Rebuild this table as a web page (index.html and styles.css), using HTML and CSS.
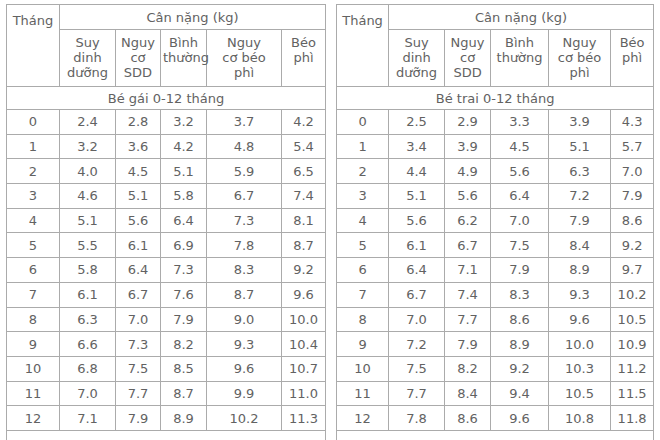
FILE: index.html
```html
<!DOCTYPE html>
<html lang="vi">
<head>
<meta charset="utf-8">
<title>Cân nặng bé 0-12 tháng</title>
<link rel="stylesheet" href="styles.css">
</head>
<body>
<div class="page">
  <table class="chart chart-girl">
    <colgroup>
      <col class="c-month"><col class="c-1"><col class="c-2"><col class="c-3"><col class="c-4"><col class="c-5">
    </colgroup>
    <thead>
      <tr class="h1">
        <th rowspan="2" class="month-head">Tháng</th>
        <th colspan="5">Cân nặng (kg)</th>
      </tr>
      <tr class="h2">
        <th>Suy<br>dinh<br>dưỡng</th>
        <th>Nguy<br>cơ<br>SDD</th>
        <th>Bình<br>thường</th>
        <th>Nguy<br>cơ béo<br>phì</th>
        <th>Béo<br>phì</th>
      </tr>
    </thead>
    <tbody>
      <tr class="group"><td colspan="6">Bé gái 0-12 tháng</td></tr>
      <tr><td>0</td><td>2.4</td><td>2.8</td><td>3.2</td><td>3.7</td><td>4.2</td></tr>
      <tr><td>1</td><td>3.2</td><td>3.6</td><td>4.2</td><td>4.8</td><td>5.4</td></tr>
      <tr><td>2</td><td>4.0</td><td>4.5</td><td>5.1</td><td>5.9</td><td>6.5</td></tr>
      <tr><td>3</td><td>4.6</td><td>5.1</td><td>5.8</td><td>6.7</td><td>7.4</td></tr>
      <tr><td>4</td><td>5.1</td><td>5.6</td><td>6.4</td><td>7.3</td><td>8.1</td></tr>
      <tr><td>5</td><td>5.5</td><td>6.1</td><td>6.9</td><td>7.8</td><td>8.7</td></tr>
      <tr><td>6</td><td>5.8</td><td>6.4</td><td>7.3</td><td>8.3</td><td>9.2</td></tr>
      <tr><td>7</td><td>6.1</td><td>6.7</td><td>7.6</td><td>8.7</td><td>9.6</td></tr>
      <tr><td>8</td><td>6.3</td><td>7.0</td><td>7.9</td><td>9.0</td><td>10.0</td></tr>
      <tr><td>9</td><td>6.6</td><td>7.3</td><td>8.2</td><td>9.3</td><td>10.4</td></tr>
      <tr><td>10</td><td>6.8</td><td>7.5</td><td>8.5</td><td>9.6</td><td>10.7</td></tr>
      <tr><td>11</td><td>7.0</td><td>7.7</td><td>8.7</td><td>9.9</td><td>11.0</td></tr>
      <tr><td>12</td><td>7.1</td><td>7.9</td><td>8.9</td><td>10.2</td><td>11.3</td></tr>
      <tr class="tail"><td colspan="6"></td></tr>
    </tbody>
  </table>

  <table class="chart chart-boy">
    <colgroup>
      <col class="c-month"><col class="c-1"><col class="c-2"><col class="c-3"><col class="c-4"><col class="c-5">
    </colgroup>
    <thead>
      <tr class="h1">
        <th rowspan="2" class="month-head">Tháng</th>
        <th colspan="5">Cân nặng (kg)</th>
      </tr>
      <tr class="h2">
        <th>Suy<br>dinh<br>dưỡng</th>
        <th>Nguy<br>cơ<br>SDD</th>
        <th>Bình<br>thường</th>
        <th>Nguy<br>cơ béo<br>phì</th>
        <th>Béo<br>phì</th>
      </tr>
    </thead>
    <tbody>
      <tr class="group"><td colspan="6">Bé trai 0-12 tháng</td></tr>
      <tr><td>0</td><td>2.5</td><td>2.9</td><td>3.3</td><td>3.9</td><td>4.3</td></tr>
      <tr><td>1</td><td>3.4</td><td>3.9</td><td>4.5</td><td>5.1</td><td>5.7</td></tr>
      <tr><td>2</td><td>4.4</td><td>4.9</td><td>5.6</td><td>6.3</td><td>7.0</td></tr>
      <tr><td>3</td><td>5.1</td><td>5.6</td><td>6.4</td><td>7.2</td><td>7.9</td></tr>
      <tr><td>4</td><td>5.6</td><td>6.2</td><td>7.0</td><td>7.9</td><td>8.6</td></tr>
      <tr><td>5</td><td>6.1</td><td>6.7</td><td>7.5</td><td>8.4</td><td>9.2</td></tr>
      <tr><td>6</td><td>6.4</td><td>7.1</td><td>7.9</td><td>8.9</td><td>9.7</td></tr>
      <tr><td>7</td><td>6.7</td><td>7.4</td><td>8.3</td><td>9.3</td><td>10.2</td></tr>
      <tr><td>8</td><td>7.0</td><td>7.7</td><td>8.6</td><td>9.6</td><td>10.5</td></tr>
      <tr><td>9</td><td>7.2</td><td>7.9</td><td>8.9</td><td>10.0</td><td>10.9</td></tr>
      <tr><td>10</td><td>7.5</td><td>8.2</td><td>9.2</td><td>10.3</td><td>11.2</td></tr>
      <tr><td>11</td><td>7.7</td><td>8.4</td><td>9.4</td><td>10.5</td><td>11.5</td></tr>
      <tr><td>12</td><td>7.8</td><td>8.6</td><td>9.6</td><td>10.8</td><td>11.8</td></tr>
      <tr class="tail"><td colspan="6"></td></tr>
    </tbody>
  </table>
</div>
</body>
</html>
```

FILE: styles.css
```css
html, body {
  margin: 0;
  padding: 0;
  background: #ffffff;
  overflow: hidden;
}

.page {
  display: flex;
  align-items: flex-start;
  gap: 10px;
  padding: 4px 0 0 6px;
  height: 436px;
  overflow: hidden;
}

.chart {
  border-collapse: collapse;
  table-layout: fixed;
  font-family: "DejaVu Sans", Verdana, sans-serif;
  font-size: 13px;
  color: #626262;
  border: 1px solid #8e8e8e;
}

.chart th,
.chart td {
  border: 1px solid #ababab;
  padding: 0 2px;
  text-align: center;
  font-weight: normal;
  line-height: 15px;
}

.chart-girl { width: 320px; }
.chart-girl .c-month { width: 53px; }
.chart-girl .c-1 { width: 56px; }
.chart-girl .c-2 { width: 45px; }
.chart-girl .c-3 { width: 46px; }
.chart-girl .c-4 { width: 75px; }
.chart-girl .c-5 { width: 44px; }

.chart-boy { width: 318px; }
.chart-boy .c-month { width: 52px; }
.chart-boy .c-1 { width: 56px; }
.chart-boy .c-2 { width: 46px; }
.chart-boy .c-3 { width: 58px; }
.chart-boy .c-4 { width: 62px; }
.chart-boy .c-5 { width: 43px; }

.h1 th {
  height: 24px;
  vertical-align: middle;
}

.chart .month-head {
  vertical-align: top;
  padding-top: 8px;
}

.h2 th {
  height: 51px;
  vertical-align: top;
  padding-top: 5px;
}

.chart tbody tr td {
  height: 23.7px;
  vertical-align: middle;
}

.chart tbody tr.group td {
  height: 22px;
}

.chart tbody tr.tail td {
  height: 30px;
}
```
